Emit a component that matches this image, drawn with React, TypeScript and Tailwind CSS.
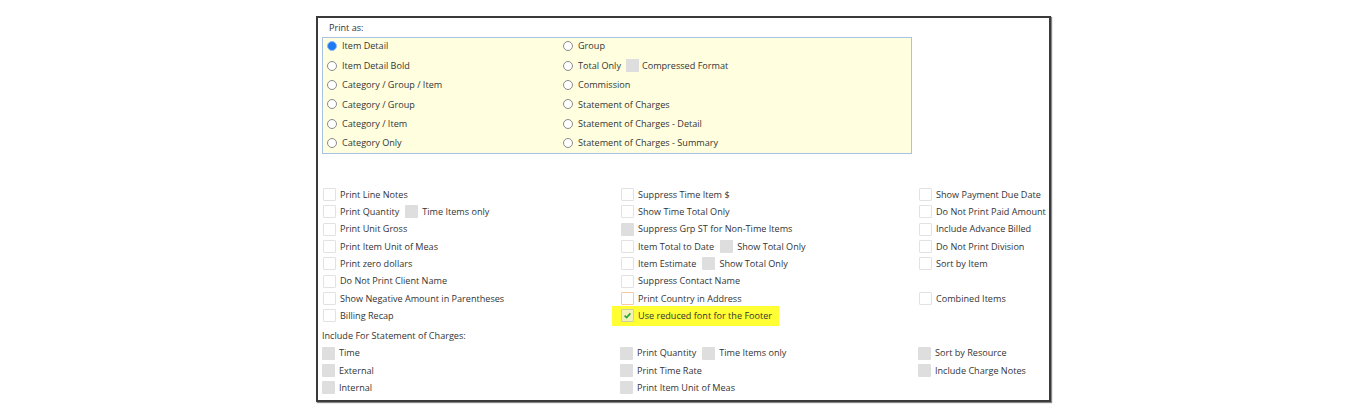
import React from 'react';

type Box = 'empty' | 'gray' | 'orange' | 'checked';

const CheckBox: React.FC<{ kind?: Box }> = ({ kind = 'empty' }) => {
  const base = 'inline-flex h-[13px] w-[13px] shrink-0 items-center justify-center rounded-[1px]';
  if (kind === 'gray') return <span className={`${base} bg-[#dedede]`} />;
  if (kind === 'orange') return <span className={`${base} border border-[#f3c9a6] bg-white`} />;
  if (kind === 'checked')
    return (
      <span className={`${base} border border-[#cfcf9a] bg-[#f2f2b8]`}>
        <svg width="9" height="9" viewBox="0 0 10 10">
          <path d="M1.8 5.2 L4 7.3 L8.2 2.6" fill="none" stroke="#23a63a" strokeWidth="1.8" />
        </svg>
      </span>
    );
  return <span className={`${base} border border-[#e2e2e2] bg-white`} />;
};

const Radio: React.FC<{ checked?: boolean }> = ({ checked }) =>
  checked ? (
    <span className="inline-block h-[10px] w-[10px] shrink-0 rounded-full border border-[#8bb8f4] bg-[#1e78f0]" />
  ) : (
    <span className="inline-block h-[10px] w-[10px] shrink-0 rounded-full border border-[#8a8a8a] bg-white" />
  );

interface Opt {
  label: string;
  kind?: Box;
  extra?: { label: string; kind?: Box };
}

const CheckRow: React.FC<{ opt?: Opt }> = ({ opt }) => {
  if (!opt) return <div className="h-[17.3px]" />;
  return (
    <div className="flex h-[17.3px] items-center gap-[4px]">
      <CheckBox kind={opt.kind} />
      <span>{opt.label}</span>
      {opt.extra && (
        <>
          <span className="ml-[2px] flex">
            <CheckBox kind={opt.extra.kind ?? 'gray'} />
          </span>
          <span>{opt.extra.label}</span>
        </>
      )}
    </div>
  );
};

const radiosLeft = ['Item Detail', 'Item Detail Bold', 'Category / Group / Item', 'Category / Group', 'Category / Item', 'Category Only'];
const radiosRight = ['Group', 'Total Only', 'Commission', 'Statement of Charges', 'Statement of Charges - Detail', 'Statement of Charges - Summary'];

const col1: (Opt | undefined)[] = [
  { label: 'Print Line Notes' },
  { label: 'Print Quantity', extra: { label: 'Time Items only' } },
  { label: 'Print Unit Gross' },
  { label: 'Print Item Unit of Meas' },
  { label: 'Print zero dollars' },
  { label: 'Do Not Print Client Name' },
  { label: 'Show Negative Amount in Parentheses' },
  { label: 'Billing Recap' },
];

const col2: (Opt | undefined)[] = [
  { label: 'Suppress Time Item $' },
  { label: 'Show Time Total Only' },
  { label: 'Suppress Grp ST for Non-Time Items', kind: 'gray' },
  { label: 'Item Total to Date', extra: { label: 'Show Total Only' } },
  { label: 'Item Estimate', extra: { label: 'Show Total Only' } },
  { label: 'Suppress Contact Name' },
  { label: 'Print Country in Address', kind: 'orange' },
];

const col3: (Opt | undefined)[] = [
  { label: 'Show Payment Due Date' },
  { label: 'Do Not Print Paid Amount' },
  { label: 'Include Advance Billed' },
  { label: 'Do Not Print Division' },
  { label: 'Sort by Item' },
  undefined,
  { label: 'Combined Items' },
];

const soc1: Opt[] = [
  { label: 'Time', kind: 'gray' },
  { label: 'External', kind: 'gray' },
  { label: 'Internal', kind: 'gray' },
];
const soc2: Opt[] = [
  { label: 'Print Quantity', kind: 'gray', extra: { label: 'Time Items only' } },
  { label: 'Print Time Rate', kind: 'gray' },
  { label: 'Print Item Unit of Meas', kind: 'gray' },
];
const soc3: Opt[] = [
  { label: 'Sort by Resource', kind: 'gray' },
  { label: 'Include Charge Notes', kind: 'gray' },
];

export default function App() {
  return (
    <div className="min-h-[417px] w-full bg-white pt-[16px] text-[9.1px] text-[#333] [font-family:'Open_Sans','Liberation_Sans',sans-serif]">
      <div className="mx-auto h-[386px] w-[735px] border-2 border-[#3a3a3a] pl-[4px] shadow-[1px_1px_1px_#888]">
        <div className="h-[19px] pl-[7px] pt-[2px] leading-[16px]">Print as:</div>
        <div className="grid h-[117px] w-[590px] grid-cols-[236px_1fr] border border-[#a9c1e2] bg-[#ffffe0] pl-[4px]">
          <div className="-mt-[1.5px] flex flex-col">
            {radiosLeft.map((r, i) => (
              <div key={r} className="flex h-[19.4px] items-center gap-[5px]">
                <Radio checked={i === 0} />
                <span>{r}</span>
              </div>
            ))}
          </div>
          <div className="-mt-[1.5px] flex flex-col">
            {radiosRight.map((r) => (
              <div key={r} className="flex h-[19.4px] items-center gap-[5px]">
                <Radio />
                <span>{r}</span>
                {r === 'Total Only' && (
                  <>
                    <span className="inline-block h-[13px] w-[13px] bg-[#dedede]" />
                    <span className="-ml-[2px]">Compressed Format</span>
                  </>
                )}
              </div>
            ))}
          </div>
        </div>

        <div className="mt-[32px] grid grid-cols-[298px_298px_1fr] pl-[1px]">
          <div className="flex flex-col">
            {col1.map((o, i) => (
              <CheckRow key={i} opt={o} />
            ))}
          </div>
          <div className="flex flex-col">
            {col2.map((o, i) => (
              <CheckRow key={i} opt={o} />
            ))}
            <div className="-my-[1.35px] -ml-[9px] flex h-[20px] w-[167px] items-center gap-[4px] bg-[#ffff33] pl-[9px]">
              <CheckBox kind="checked" />
              <span>Use reduced font for the Footer</span>
            </div>
          </div>
          <div className="flex flex-col">
            {col3.map((o, i) => (
              <CheckRow key={i} opt={o} />
            ))}
          </div>
        </div>

        <div className="h-[20px] pt-[4px] leading-[16px]">Include For Statement of Charges:</div>
        <div className="grid grid-cols-[298px_298px_1fr]">
          <div className="flex flex-col">
            {soc1.map((o, i) => (
              <CheckRow key={i} opt={o} />
            ))}
          </div>
          <div className="flex flex-col">
            {soc2.map((o, i) => (
              <CheckRow key={i} opt={o} />
            ))}
          </div>
          <div className="flex flex-col">
            {soc3.map((o, i) => (
              <CheckRow key={i} opt={o} />
            ))}
          </div>
        </div>
      </div>
    </div>
  );
}
